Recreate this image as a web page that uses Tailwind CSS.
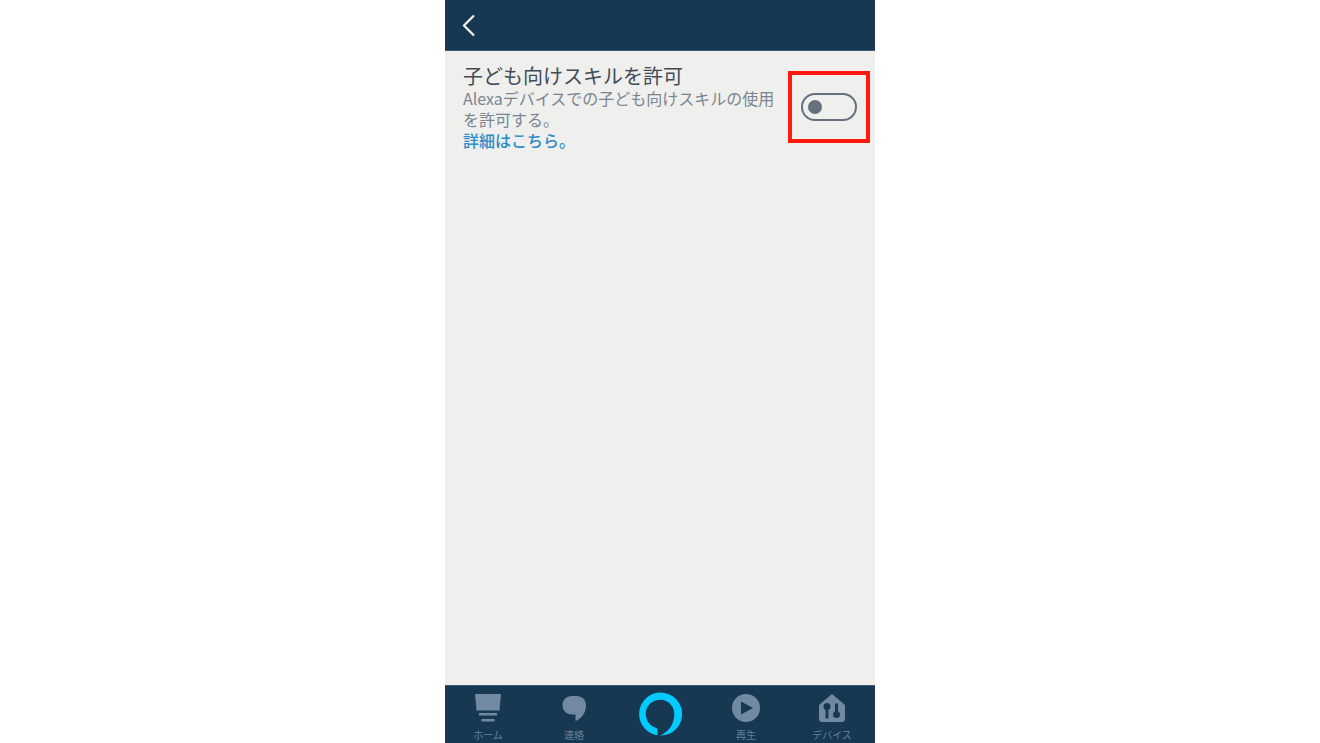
<!DOCTYPE html>
<html lang="ja">
<head>
    <meta charset="UTF-8">
    <meta name="viewport" content="width=device-width, initial-scale=1.0">
    <title>子ども向けスキルを許可</title>
    <script src="https://cdn.jsdelivr.net/npm/@tailwindcss/browser@4"></script>
    <style>
        body {
            font-family: 'Noto Sans CJK JP', sans-serif;
        }
    </style>
</head>
<body class="bg-white">
    <div class="mx-auto flex min-h-screen w-full max-w-[430px] flex-col bg-[#efefed]">
        <!-- Header -->
        <header class="flex h-[51px] items-center border-b border-[#3c5872] bg-[#173852] px-4">
            <button type="button" aria-label="戻る" class="text-[#f0f3f5]">
                <svg class="h-6 w-4" viewBox="0 0 16 24" fill="none" stroke="currentColor" stroke-width="2.2">
                    <path d="M13 2.500L3 12.500L13 22.500"/>
                </svg>
            </button>
        </header>

        <!-- Setting -->
        <main class="flex flex-1 items-start justify-between pt-3 pr-[5px] pl-[18px]">
            <div class="w-[312px] text-base leading-[21px] text-[#7b858f]">
                <h1 class="text-xl leading-[25px] whitespace-nowrap text-[#424c57]"><label for="kidsSkill" class="block">子ども向けスキルを許可</label></h1>
                <p>Alexaデバイスでの子ども向けスキルの使用を許可する。</p>
                <a href="#" class="block font-medium text-[#2b8cc8]">詳細はこちら。</a>
            </div>
            <div class="mt-2 flex h-[72px] w-[82px] items-center justify-center border-4 border-[#ff1a0d]">
                <div class="relative flex h-7 w-14">
                    <input type="checkbox" id="kidsSkill" role="switch" class="peer h-7 w-14 appearance-none rounded-full border-2 border-[#65717e]">
                    <span class="pointer-events-none absolute top-[7px] left-[7px] size-[14px] rounded-full bg-[#65717e] peer-checked:left-[35px]"></span>
                </div>
            </div>
        </main>

        <!-- Bottom navigation -->
        <nav class="grid h-[58px] grid-cols-5 border-t border-[#3c5872] bg-[#173852] text-[10px] leading-3 text-[#66809a]">
            <a href="#" class="flex flex-col items-center gap-1 pt-[7px]">
                <svg class="h-8 w-8" viewBox="0 0 32 32" fill="#7189a1">
                    <path d="M3 1H29L27.500 17.500H4.500Z"/>
                    <path d="M7 20H25V22.500H7ZM9.500 26H22.500V28.500H9.500Z"/>
                </svg>
                ホーム
            </a>
            <a href="#" class="flex flex-col items-center gap-1 pt-[7px]">
                <svg class="h-8 w-8" viewBox="0 0 32 32" fill="#7189a1">
                    <path d="M14 3H18.500C24 3 28 6.800 28 12C28 19.500 24 25.500 17.500 28V21.500H14C8.500 21.500 4.500 17.500 4.500 12.200C4.500 6.800 8.500 3 14 3Z"/>
                </svg>
                連絡
            </a>
            <a href="#" aria-label="Alexa" class="flex justify-center pt-[6px]">
                <svg class="h-11 w-11" viewBox="0 0 44 44" fill="#00caff">
                    <path d="M19.500 43.300A21.500 21.500 0 1 1 21.500 43.500C30.500 40.500 36.300 32 36.300 22A14.300 14.300 0 1 0 17.300 35.500C19 36.200 19.500 36.800 19.500 38.500Z"/>
                </svg>
            </a>
            <a href="#" class="flex flex-col items-center gap-1 pt-[7px]">
                <svg class="h-8 w-8" viewBox="0 0 32 32">
                    <circle cx="16" cy="15" r="14" fill="#7189a1"/>
                    <path d="M11 8.500L23 15L11 21.500Z" fill="#173852"/>
                </svg>
                再生
            </a>
            <a href="#" class="flex flex-col items-center gap-1 pt-[7px]">
                <svg class="h-8 w-8" viewBox="0 0 32 32">
                    <path d="M16 1L29 12V26Q29 29 26 29H6Q3 29 3 26V12Z" fill="#7189a1"/>
                    <g fill="#173852" stroke="#173852" stroke-width="3">
                        <circle cx="11" cy="13.500" r="2"/>
                        <path d="M11 13V25.500"/>
                        <circle cx="20.500" cy="21.500" r="2"/>
                        <path d="M20.500 22V10.500"/>
                    </g>
                </svg>
                デバイス
            </a>
        </nav>
    </div>
</body>
</html>
